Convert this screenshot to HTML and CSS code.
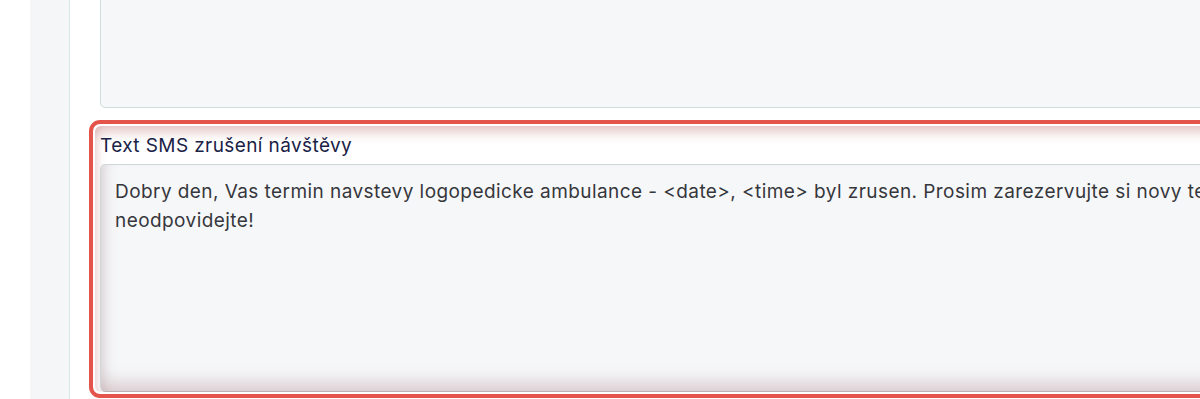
FILE: index.html
```html
<!DOCTYPE html>
<html lang="cs">
<head>
<meta charset="utf-8">
<link rel="stylesheet" href="styles.css">
</head>
<body>
<div class="layout">
  <div class="rail"></div>
  <div class="sidebar"></div>
  <main class="content">
    <div class="prev-field"></div>
    <div class="focus-ring">
      <div class="field">
        <label class="label" for="sms">Text SMS zrušení návštěvy</label>
        <textarea id="sms" class="textarea">Dobry den, Vas termin navstevy logopedicke ambulance - &lt;date&gt;, &lt;time&gt; byl zrusen. Prosim zarezervujte si novy termin. Na tuto zpravu neodpovidejte!</textarea>
      </div>
    </div>
  </main>
</div>
</body>
</html>
```

FILE: styles.css
```css
html, body {
  margin: 0;
  padding: 0;
  background: #ffffff;
  overflow: hidden;
  height: 399px;
}
.layout {
  display: flex;
  height: 399px;
  font-family: "Inter", "Noto Sans", sans-serif;
}
.rail {
  width: 30px;
  flex: none;
  background: #ffffff;
}
.sidebar {
  width: 39px;
  flex: none;
  background: #f5f6f8;
  border-right: 1px solid #d9e7e5;
}
.content {
  flex: none;
  width: 1480px;
  padding-left: 30px;
}
.prev-field {
  margin-top: -20px;
  height: 128px;
  box-sizing: border-box;
  border: 1px solid #d2dedc;
  border-radius: 5px;
  background: #f5f7f8;
}
.focus-ring {
  margin-top: 12px;
  margin-left: -11px;
  border: 4px solid #e4544a;
  border-radius: 11px;
  padding: 2px;
  background: #ffffff;
}
.field {
  border-radius: 6px;
  padding: 8px 0 0 5px;
  box-shadow: inset 0 12px 12px -6px rgba(195, 120, 120, 0.42), inset 8px 0 10px -6px rgba(190, 120, 120, 0.3);
}
.label {
  display: block;
  font-size: 19px;
  line-height: 24px;
  letter-spacing: 0.4px;
  color: #1a2246;
  margin-bottom: 6px;
}
.textarea {
  display: block;
  box-sizing: border-box;
  width: 1440px;
  height: 228px;
  margin: 0;
  border: 1px solid #cfd8d8;
  border-bottom-color: #b9b3b5;
  border-radius: 5px;
  background: #f6f7f9;
  padding: 12px 14px;
  font-family: inherit;
  font-size: 19px;
  line-height: 29px;
  letter-spacing: 0.43px;
  color: #36373c;
  resize: none;
  box-shadow: inset 0 -22px 18px -14px rgba(185, 150, 155, 0.45), inset 14px 0 14px -12px rgba(170, 150, 155, 0.45);
}
```
